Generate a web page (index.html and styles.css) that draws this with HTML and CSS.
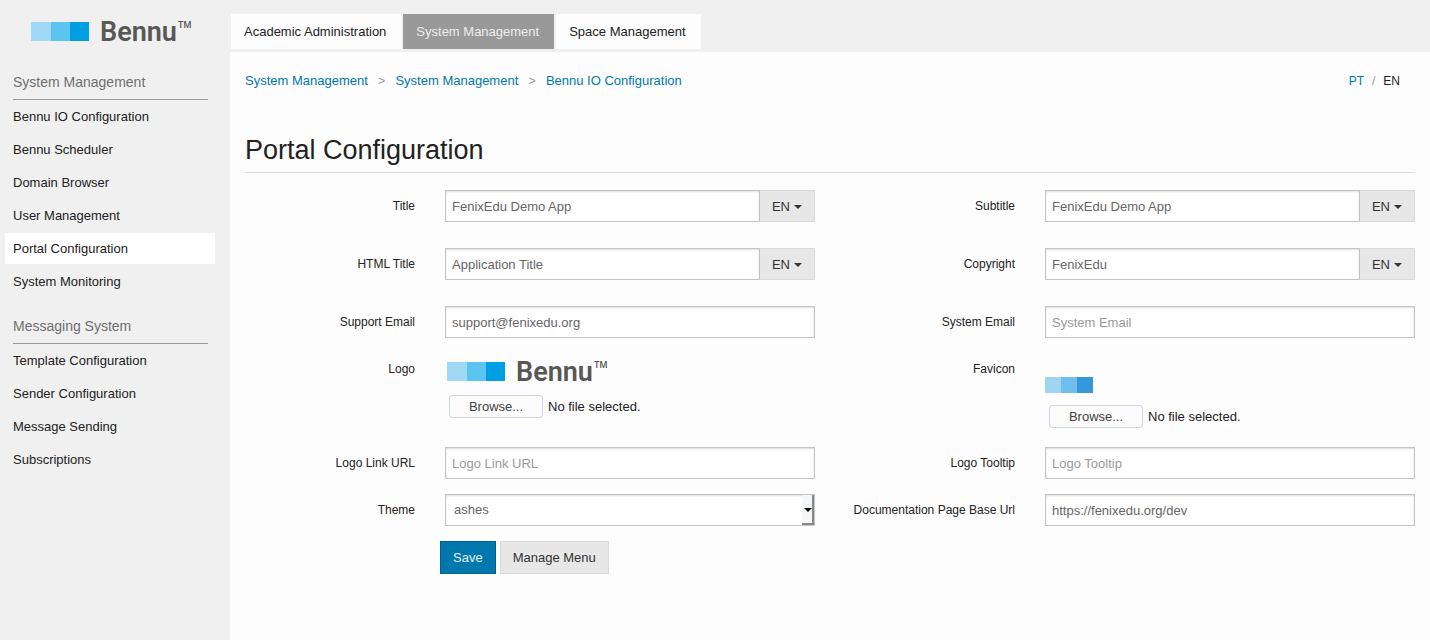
FILE: index.html
```html
<!DOCTYPE html>
<html lang="en">
<head>
<meta charset="utf-8">
<title>Portal Configuration</title>
<link rel="stylesheet" href="styles.css">
</head>
<body>
<div class="app">
  <aside class="sidebar">
    <a class="brand" href="#" aria-label="Bennu">
      <svg class="logo" width="166" height="32" viewBox="0 -4 166 32">
        <rect x="0" y="2" width="20" height="19" fill="#a0d9f7"/>
        <rect x="20" y="2" width="19" height="19" fill="#5cc4f1"/>
        <rect x="39" y="2" width="19" height="19" fill="#009fe3"/>
        <text class="logo-name" x="69" y="21">Bennu</text>
        <text class="logo-mark" x="147" y="8">TM</text>
      </svg>
    </a>
    <nav>
      <h2 class="menu-title">System Management</h2>
      <ul class="menu">
        <li><a href="#">Bennu IO Configuration</a></li>
        <li><a href="#">Bennu Scheduler</a></li>
        <li><a href="#">Domain Browser</a></li>
        <li><a href="#">User Management</a></li>
        <li><a class="active" href="#">Portal Configuration</a></li>
        <li><a href="#">System Monitoring</a></li>
      </ul>
      <h2 class="menu-title">Messaging System</h2>
      <ul class="menu">
        <li><a href="#">Template Configuration</a></li>
        <li><a href="#">Sender Configuration</a></li>
        <li><a href="#">Message Sending</a></li>
        <li><a href="#">Subscriptions</a></li>
      </ul>
    </nav>
  </aside>
  <div class="page">
    <nav class="tabs">
      <a href="#">Academic Administration</a>
      <a class="active" href="#">System Management</a>
      <a href="#">Space Management</a>
    </nav>
    <main class="content">
      <div class="topline">
        <nav class="crumbs">
          <a href="#">System Management</a><span>&gt;</span><a href="#">System Management</a><span>&gt;</span><a href="#">Bennu IO Configuration</a>
        </nav>
        <div class="langs"><a href="#">PT</a><span>/</span><b>EN</b></div>
      </div>
      <h1>Portal Configuration</h1>
      <form class="form">
        <div class="row spaced">
          <label for="title">Title</label>
          <div class="group"><input class="control" id="title" type="text" value="FenixEdu Demo App"><button class="btn lang" type="button">EN<i class="caret"></i></button></div>
        </div>
        <div class="row spaced">
          <label for="subtitle">Subtitle</label>
          <div class="group"><input class="control" id="subtitle" type="text" value="FenixEdu Demo App"><button class="btn lang" type="button">EN<i class="caret"></i></button></div>
        </div>
        <div class="row spaced">
          <label for="html-title">HTML Title</label>
          <div class="group"><input class="control" id="html-title" type="text" value="Application Title"><button class="btn lang" type="button">EN<i class="caret"></i></button></div>
        </div>
        <div class="row spaced">
          <label for="copyright">Copyright</label>
          <div class="group"><input class="control" id="copyright" type="text" value="FenixEdu"><button class="btn lang" type="button">EN<i class="caret"></i></button></div>
        </div>
        <div class="row">
          <label for="support">Support Email</label>
          <input class="control" id="support" type="text" value="support@fenixedu.org">
        </div>
        <div class="row">
          <label for="system">System Email</label>
          <input class="control" id="system" type="text" placeholder="System Email">
        </div>
        <div class="row">
          <label for="logo">Logo</label>
          <div class="upload">
            <svg class="logo preview" width="166" height="32" viewBox="0 -4 166 32">
              <rect x="0" y="2" width="20" height="19" fill="#a0d9f7"/>
              <rect x="20" y="2" width="19" height="19" fill="#5cc4f1"/>
              <rect x="39" y="2" width="19" height="19" fill="#009fe3"/>
              <text class="logo-name" x="69" y="21">Bennu</text>
              <text class="logo-mark" x="147" y="8">TM</text>
            </svg>
            <div class="file"><input id="logo" type="file"><label class="browse" for="logo">Browse...</label><span>No file selected.</span></div>
          </div>
        </div>
        <div class="row">
          <label for="favicon">Favicon</label>
          <div class="upload">
            <svg class="icon" width="48" height="16" viewBox="0 0 48 16">
              <rect width="16" height="16" fill="#9dd5f0"/>
              <rect x="16" width="16" height="16" fill="#70beea"/>
              <rect x="32" width="16" height="16" fill="#3498db"/>
            </svg>
            <div class="file"><input id="favicon" type="file"><label class="browse" for="favicon">Browse...</label><span>No file selected.</span></div>
          </div>
        </div>
        <div class="row">
          <label for="link">Logo Link URL</label>
          <input class="control" id="link" type="text" placeholder="Logo Link URL">
        </div>
        <div class="row">
          <label for="tooltip">Logo Tooltip</label>
          <input class="control" id="tooltip" type="text" placeholder="Logo Tooltip">
        </div>
        <div class="row">
          <label for="theme">Theme</label>
          <div class="select"><select class="control" id="theme"><option>ashes</option></select></div>
        </div>
        <div class="row">
          <label for="docs">Documentation Page Base Url</label>
          <input class="control" id="docs" type="text" value="https://fenixedu.org/dev">
        </div>
        <div class="row">
          <div class="actions">
            <button class="btn primary" type="submit">Save</button>
            <button class="btn" type="button">Manage Menu</button>
          </div>
        </div>
      </form>
    </main>
  </div>
</div>
</body>
</html>
```

FILE: styles.css
```css
*, *::before, *::after { box-sizing: border-box; }
body {
  margin: 0;
  background: #fdfdfd;
  color: #222;
  font: 13px/20px "Liberation Sans", Arial, sans-serif;
}
a { color: #0078b0; text-decoration: none; }
.app { display: flex; min-height: 100vh; }

.sidebar { flex: 0 0 230px; background: #f0f0f0; }
.brand { display: block; padding: 16px 0 0 31px; }
.logo { display: block; }
.logo-name { font: 600 27px Roboto, sans-serif; fill: #575756; }
.logo-mark { font: 500 9px Roboto, sans-serif; fill: #575756; }
.menu-title {
  margin: 24px 22px 1px 13px;
  padding-bottom: 7px;
  border-bottom: 1px solid #999;
  color: #6f6f6f;
  font-size: 14px;
  font-weight: normal;
  line-height: 20px;
}
.menu {
  display: grid;
  gap: 2px;
  margin: 0 15px 0 5px;
  padding: 0;
  list-style: none;
}
.menu + .menu-title { margin-top: 19px; }
.menu a { display: block; padding: 0 8px; color: #222; line-height: 31px; }
.menu .active { background: #fff; }

.page { flex: 1; min-width: 0; }
.tabs { display: flex; gap: 2px; padding: 14px 0 3px 1px; background: #f0f0f0; }
.tabs a { padding: 0 15px 0 13px; background: #fdfdfd; color: #222; line-height: 35px; }
.tabs .active { background: #999; color: #eee; }

.content { padding: 19px 15px; }
.topline { display: flex; justify-content: space-between; padding-right: 15px; }
.crumbs span { padding: 0 10px; color: #999; }
.langs { font-size: 12px; }
.langs span { padding: 0 8px; color: #999; }
.langs b { font-weight: normal; }
h1 {
  margin: 42px 0 17px;
  padding-bottom: 5px;
  border-bottom: 1px solid #ddd;
  font-size: 27px;
  font-weight: normal;
  line-height: 34px;
}

.form { display: grid; grid-template-columns: 1fr 1fr; row-gap: 15px; margin: 0 -15px; }
.row { display: grid; grid-template-columns: 185fr 370fr; align-items: start; column-gap: 30px; padding-right: 15px; }
.row.spaced { padding-bottom: 11px; }
.row > label { font-size: 12px; line-height: 32px; text-align: right; white-space: nowrap; justify-self: end; }
.control {
  width: 100%;
  min-width: 0;
  height: 32px;
  margin: 0;
  padding: 0 6px;
  border: 1px solid #c4c4c4;
  border-radius: 0;
  background: #fff;
  box-shadow: inset 0 1px 2px #ddd;
  color: #666;
  font: inherit;
}
.control::placeholder { color: #999; opacity: 1; }
.group { display: flex; }
.group .control { border-right: 0; }
.btn {
  height: 33px;
  padding: 0 12px;
  border: 1px solid #d9d9d9;
  background: #e7e7e7;
  color: #333;
  font: inherit;
}
.lang { flex: 0 0 56px; display: flex; align-items: center; height: 32px; padding-top: 2px; border-left-color: #c4c4c4; }
.caret { margin-left: 4px; border: 4px solid transparent; border-top-color: #333; border-bottom: 0; }
.primary { border-color: #006190; background: #0078ad; color: #e7f5fb; }

.upload { height: 79px; }
.preview { margin: 3px 0 7px 2px; }
.icon { display: block; margin: 16px 0 12px; }
.icon { margin-top: 24px; }
.file { display: flex; align-items: center; gap: 5px; margin-left: 4px; position: relative; }
.file input { position: absolute; width: 94px; height: 23px; opacity: 0; }
.browse {
  width: 94px;
  border: 1px solid #cfd6e6;
  border-radius: 3px;
  background: #fbfbfb;
  color: #444;
  line-height: 21px;
  text-align: center;
}

.select { position: relative; }
.select .control { appearance: none; padding-left: 8px; }
.select::before {
  content: "";
  position: absolute;
  top: 1px;
  right: 1px;
  width: 12px;
  height: 30px;
  border: solid #888;
  border-width: 0 2px 2px 0;
  background: #f5f6f8;
  pointer-events: none;
}
.select::after {
  content: "";
  position: absolute;
  top: 14px;
  right: 3px;
  border: 4px solid transparent;
  border-top-color: #000;
  border-bottom: 0;
  pointer-events: none;
}
.actions { grid-column: 2; display: flex; gap: 4px; margin-left: -5px; }
```
